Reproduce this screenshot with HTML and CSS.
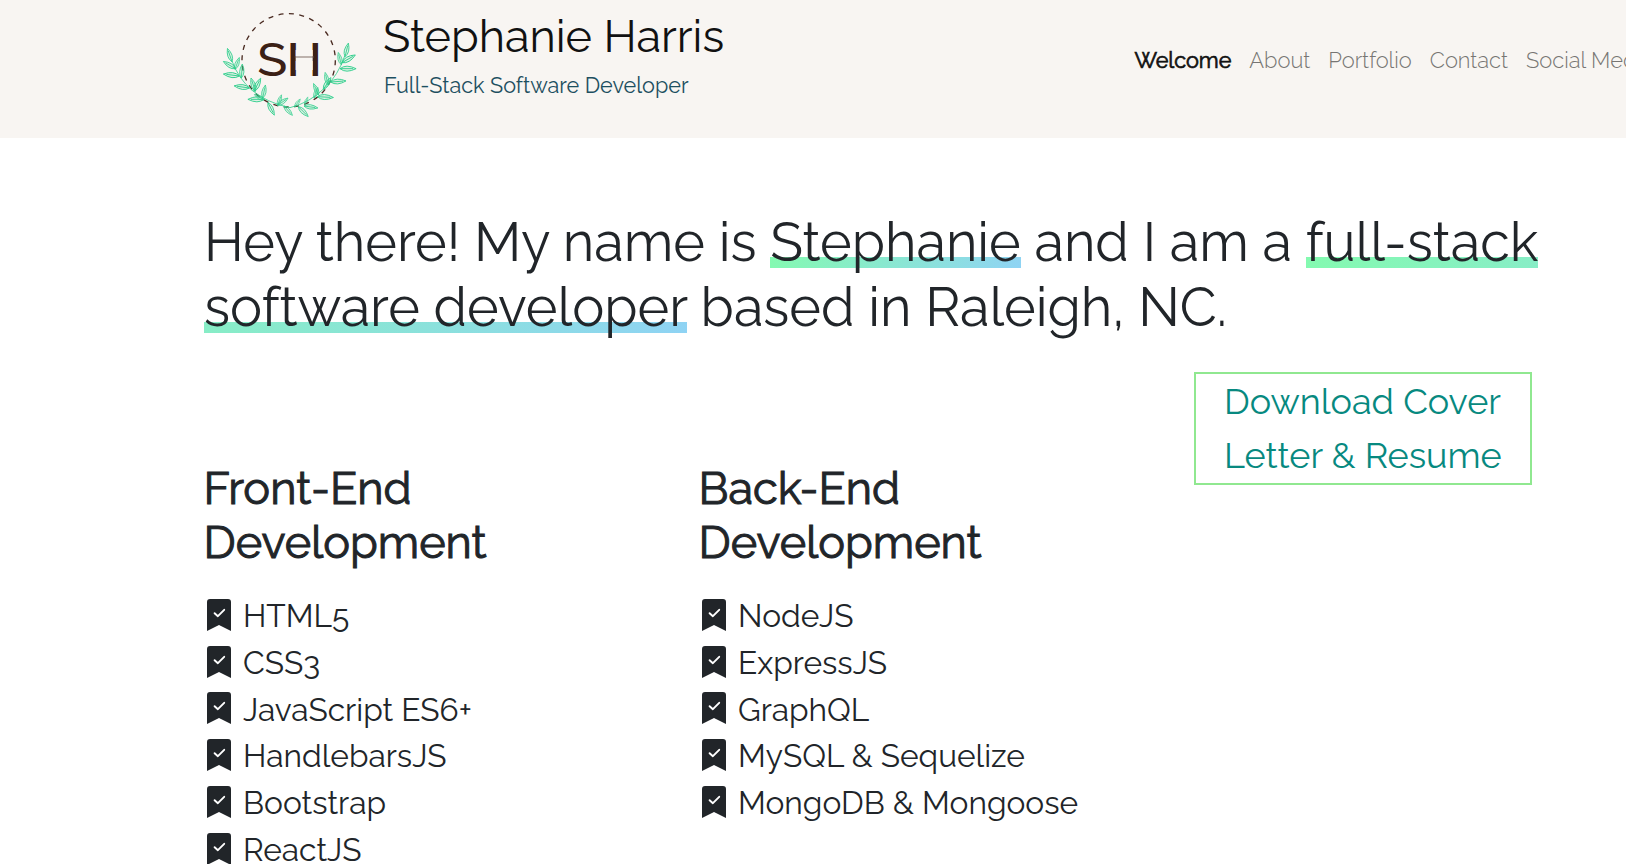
FILE: index.html
```html
<!DOCTYPE html>
<html lang="en">
<head>
<meta charset="utf-8">
<title>Stephanie Harris</title>
<link rel="stylesheet" href="styles.css">
</head>
<body>
<svg class="defs" width="0" height="0" aria-hidden="true">
  <symbol id="check" viewBox="0 0 24 32">
    <path d="M3 0H21Q24 0 24 3V32L12 26L0 32V3Q0 0 3 0Z" fill="#212529"/>
    <path d="M7.6 14.2L10.9 17.2L17.2 10.8" fill="none" stroke="#fff" stroke-width="1.9" stroke-linecap="round" stroke-linejoin="round"/>
  </symbol>
</svg>
<header class="header">
  <svg class="logo" viewBox="0 0 480 390" role="img" aria-label="SH">
    <defs>
      <g id="leaf"><path d="M0 0Q16 -13 42 0Q16 13 0 0ZM0 0L34 0"/></g>
    </defs>
    <circle cx="236" cy="181" r="140" fill="none" stroke="#4a2b22" stroke-width="4" stroke-dasharray="15 16.4"/>
    <g class="branch">
      <path class="stem" d="M66 183Q85 235 125 270Q170 308 240 323"/>
      <path class="stem" d="M404 168Q385 225 345 263Q300 308 240 323"/>
      <use href="#leaf" transform="translate(66 185) rotate(-109)"/>
      <use href="#leaf" transform="translate(76 206) rotate(-149)"/>
      <use href="#leaf" transform="translate(75 208) rotate(-70) scale(.9)"/>
      <use href="#leaf" transform="translate(88 228) rotate(-173) scale(1.15)"/>
      <use href="#leaf" transform="translate(94 234) rotate(-86)"/>
      <use href="#leaf" transform="translate(118 264) rotate(-172) scale(1.1)"/>
      <use href="#leaf" transform="translate(136 274) rotate(-108)"/>
      <use href="#leaf" transform="translate(132 274) rotate(-63) scale(1.05)"/>
      <use href="#leaf" transform="translate(162 298) rotate(-180) scale(1.15)"/>
      <use href="#leaf" transform="translate(158 294) rotate(-78) scale(.95)"/>
      <use href="#leaf" transform="translate(162 300) rotate(-150) scale(.8)"/>
      <use href="#leaf" transform="translate(174 308) rotate(63)"/>
      <use href="#leaf" transform="translate(203 316) rotate(-70) scale(.8)"/>
      <use href="#leaf" transform="translate(203 316) rotate(-35) scale(.9)"/>
      <use href="#leaf" transform="translate(405 170) rotate(-76)"/>
      <use href="#leaf" transform="translate(396 188) rotate(-30) scale(1.1)"/>
      <use href="#leaf" transform="translate(394 194) rotate(-104) scale(.9)"/>
      <use href="#leaf" transform="translate(390 206) rotate(0) scale(1.15)"/>
      <use href="#leaf" transform="translate(362 246) rotate(-4) scale(1.1)"/>
      <use href="#leaf" transform="translate(354 254) rotate(-103) scale(.9)"/>
      <use href="#leaf" transform="translate(340 268) rotate(-57)"/>
      <use href="#leaf" transform="translate(326 285) rotate(-114) scale(.9)"/>
      <use href="#leaf" transform="translate(322 290) rotate(3) scale(1.15)"/>
      <use href="#leaf" transform="translate(312 294) rotate(-70) scale(.8)"/>
      <use href="#leaf" transform="translate(284 314) rotate(-68) scale(.6)"/>
      <use href="#leaf" transform="translate(282 318) rotate(8)"/>
      <use href="#leaf" transform="translate(265 320) rotate(45)"/>
      <use href="#leaf" transform="translate(222 318) rotate(48) scale(.9)"/>
      <use href="#leaf" transform="translate(254 321) rotate(-55) scale(.7)"/>
    </g>
    <g class="initials">
      <text x="142" y="227" textLength="90" lengthAdjust="spacingAndGlyphs">S</text>
      <text class="h" x="230" y="227" textLength="105" lengthAdjust="spacingAndGlyphs">H</text>
    </g>
    <rect class="gap" x="257" y="150" width="51" height="60"/>
    <path class="bar" d="M254 171H312"/>
  </svg>
  <div class="brand">
    <div class="name">Stephanie Harris</div>
    <div class="role">Full-Stack Software Developer</div>
  </div>
  <nav class="nav">
    <a class="active">Welcome</a>
    <a>About</a>
    <a>Portfolio</a>
    <a>Contact</a>
    <a>Social Media</a>
  </nav>
</header>
<main class="main">
  <h1 class="intro">Hey there! My name is <span class="mark">Stephanie</span> and I am a <span class="mark">full-stack<br>software developer</span> based in Raleigh, NC.</h1>
  <div class="columns">
    <section class="skills">
      <h2 class="title">Front-End<br>Development</h2>
      <ul class="list">
        <li><svg class="icon"><use href="#check"/></svg>HTML5</li>
        <li><svg class="icon"><use href="#check"/></svg>CSS3</li>
        <li><svg class="icon"><use href="#check"/></svg>JavaScript ES6+</li>
        <li><svg class="icon"><use href="#check"/></svg>HandlebarsJS</li>
        <li><svg class="icon"><use href="#check"/></svg>Bootstrap</li>
        <li><svg class="icon"><use href="#check"/></svg>ReactJS</li>
      </ul>
    </section>
    <section class="skills">
      <h2 class="title">Back-End<br>Development</h2>
      <ul class="list">
        <li><svg class="icon"><use href="#check"/></svg>NodeJS</li>
        <li><svg class="icon"><use href="#check"/></svg>ExpressJS</li>
        <li><svg class="icon"><use href="#check"/></svg>GraphQL</li>
        <li><svg class="icon"><use href="#check"/></svg>MySQL &amp; Sequelize</li>
        <li><svg class="icon"><use href="#check"/></svg>MongoDB &amp; Mongoose</li>
      </ul>
    </section>
    <a class="download">Download Cover<br>Letter &amp; Resume</a>
  </div>
</main>
</body>
</html>
```
FILE: styles.css
```css
* { box-sizing: border-box; }
html, body { height: 100%; overflow: hidden; }
body {
  margin: 0;
  background: #fff;
  color: #212529;
  font-family: Raleway, Lato, sans-serif;
  font-weight: 400;
}
.defs { display: block; height: 0; }

.header {
  display: flex;
  height: 138px;
  padding-left: 210px;
  background: #f8f5f2;
}
.logo { flex: none; width: 160px; height: 130px; }
.branch { fill: rgba(60, 210, 145, .14); stroke: #2fce8c; stroke-width: 2.4; }
.stem { fill: none; }
.initials { fill: #3b2016; font-size: 138px; font-weight: 500; }
.h { font-weight: 600; }
.gap { fill: #f8f5f2; }
.bar { stroke: #6b564e; stroke-width: 2.5; }
.brand { flex: none; width: 764.5px; padding: 10px 0 0 13px; }
.name {
  color: #111;
  font-size: 45px;
  line-height: 54px;
}
.role {
  margin-top: 9px;
  padding-left: 1px;
  color: #1d4f60;
  font-size: 21.6px;
  font-weight: 370;
  line-height: 26px;
}
.nav {
  display: flex;
  flex: none;
  align-items: baseline;
  gap: 18px;
  height: 74px;
  padding-top: 47px;
  color: #777573;
  font-size: 21.9px;
  font-weight: 350;
  line-height: 26px;
}
.nav .active {
  color: #111;
  font-size: 21.6px;
  font-weight: 400;
  -webkit-text-stroke: .7px;
}

.main { padding: 72px 0 0 204px; }
.intro {
  margin: 0;
  font-size: 53.95px;
  font-weight: 400;
  line-height: 65px;
  white-space: pre;
}
.mark {
  background: linear-gradient(120deg, #84fab0 0%, #8fd3f4 100%) 0 47px / 100% 11px no-repeat;
}

.columns {
  display: grid;
  grid-template-columns: 495px 495px 338px;
  align-items: start;
}
.skills { padding-top: 122px; }
.title {
  margin: 0 0 23px -.5px;
  font-size: 45px;
  font-weight: 400;
  line-height: 54px;
  -webkit-text-stroke: 1px;
}
.list {
  margin: 0;
  padding: 0 0 0 3.4px;
  list-style: none;
  font-size: 31.7px;
  font-weight: 370;
  line-height: 46.8px;
}
.list li { display: flex; align-items: center; white-space: pre; }
.icon { flex: none; width: 24px; height: 32px; margin: 0 11.6px 3px 0; }

.download {
  height: 112.5px;
  margin-top: 32px;
  padding-left: 28px;
  border: 2px solid #90e890;
  color: #078980;
  font-size: 36px;
  line-height: 54px;
}
```
